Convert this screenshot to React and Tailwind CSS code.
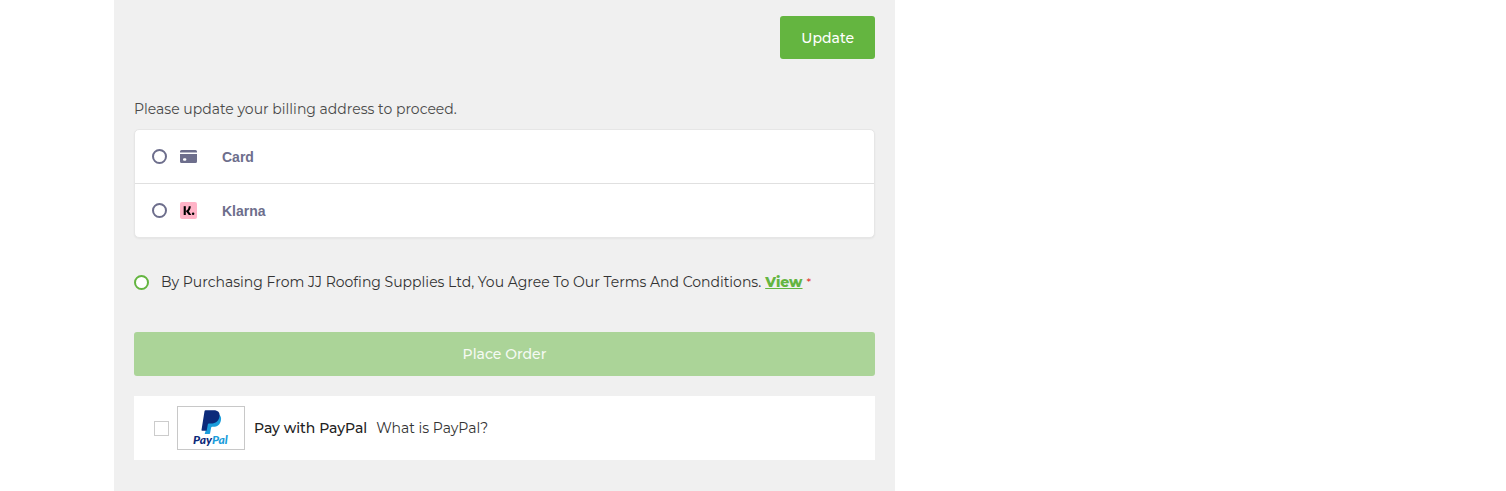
import { useState } from 'react';

function CardIcon() {
    return (
        <svg className="w-[17px] h-[17px]" viewBox="0 0 17 17" fill="#6d6e8c" aria-hidden="true">
            <path d="M1.5 2h14A1.5 1.5 0 0 1 17 3.5V4.4H0V3.5A1.5 1.5 0 0 1 1.5 2z" />
            <path fillRule="evenodd" d="M0 6h17v7.5a1.5 1.5 0 0 1-1.5 1.500h-14A1.5 1.5 0 0 1 0 13.500zM4.300 10.200a1.300 1.300 0 1 0 0 2.600h.8a1.300 1.300 0 1 0 0-2.600z" />
        </svg>
    );
}

function KlarnaIcon() {
    return (
        <svg className="w-[17px] h-[17px]" viewBox="0 0 17 17" aria-hidden="true">
            <rect width="17" height="17" rx="2" fill="#ffb3c7" />
            <path d="M3.700 4.200h2.100v8.800H3.700z" />
            <path d="M10.800 4.200H8.700c0 1.800-.8 3.300-2.100 4.300l-.8.600 3 3.900h2.600L8.700 9.300c1.300-1.300 2.100-3 2.100-5.100z" />
            <circle cx="13.100" cy="11.800" r="1.250" />
        </svg>
    );
}

function PayPalLogo() {
    return (
        <svg className="w-[66px] h-[42px]" viewBox="0 0 66 42" role="img" aria-label="PayPal">
            <path fill="#1a9ddb" d="M40.800 7.500c2 1.200 2.700 3.200 2.100 6-.9 4.300-3.600 6.300-7.600 6.300h-1.200c-.5 0-.9.400-1 .9l-1 5.600c-.1.400-.4.700-.8.700h-4.600l1.600-5.600 2-10.300z" />
            <path fill="#0c2a7a" d="M27.600 3.200h8.100c4.200 0 6.500 2.200 5.800 6.300-.8 4.800-3.800 7-8.400 7h-2.200c-.6 0-1 .4-1.100 1l-1 5.400c-.1.600-.4.800-.9.800h-3.800c-.5 0-.7-.3-.6-.8l3-18.700c.1-.6.500-1 1.100-1z" />
            <text x="15" y="37" className="font-['Lato',sans-serif] text-[12px] font-black italic">
                <tspan fill="#0c2a7a">Pay</tspan>
                <tspan fill="#1a9ddb">Pal</tspan>
            </text>
        </svg>
    );
}

const methods = [
    { id: 'card', label: 'Card', Icon: CardIcon },
    { id: 'klarna', label: 'Klarna', Icon: KlarnaIcon },
];

export default function App() {
    const [method, setMethod] = useState('');

    return (
        <div className="min-h-screen bg-white px-[114px] font-['Montserrat','Inter',sans-serif] text-sm text-[#333]">
            <div className="grid min-h-screen grid-cols-[11fr_7fr]">
                <form className="bg-[#f0f0f0] px-5 pt-4" onSubmit={(e) => e.preventDefault()}>
                    <div className="flex justify-end">
                        <button type="button" className="h-[43px] rounded-[3px] bg-[#64b540] px-[21px] font-medium text-white">
                            Update
                        </button>
                    </div>

                    {/* Payment methods */}
                    <p className="mt-10 text-[#4a4a4a]">Please update your billing address to proceed.</p>
                    <div className="mt-[10px] divide-y divide-[#e0e0e0] rounded-[5px] border border-[#e6e6e6] bg-white font-['Liberation_Sans',sans-serif] font-bold text-[#6d6e8c] shadow-xs">
                        {methods.map(({ id, label, Icon }) => (
                            <label key={id} className="box-content flex h-[53px] items-center pl-[17px]">
                                <input
                                    type="radio"
                                    name="method"
                                    value={id}
                                    checked={method === id}
                                    onChange={() => setMethod(id)}
                                    className="mr-[13px] size-[15px] appearance-none rounded-full border-2 border-[#6d6e8c] bg-white checked:border-4"
                                />
                                <Icon />
                                <span className="ml-[25px]">{label}</span>
                            </label>
                        ))}
                    </div>

                    {/* Terms */}
                    <div className="mt-[34px] flex items-center">
                        <input
                            type="radio"
                            id="terms"
                            name="terms"
                            className="mr-3 size-[15px] appearance-none rounded-full border-2 border-[#64b540] bg-white checked:border-4"
                        />
                        <label htmlFor="terms">
                            By Purchasing From JJ Roofing Supplies Ltd, You Agree To Our Terms And Conditions.
                        </label>
                        <a href="#terms" className="ml-1 font-extrabold text-[#64b540] underline">View</a>
                        <span className="ml-1 text-xs text-[#e02b27]">*</span>
                    </div>

                    <button type="submit" className="mt-10 h-11 w-full rounded-[3px] bg-[#abd498] font-medium text-[#f5faf3]">
                        Place Order
                    </button>

                    {/* PayPal */}
                    <div className="mt-5 flex h-16 items-center bg-white pl-5">
                        <input
                            type="checkbox"
                            id="paypal"
                            className="mr-2 size-[15px] appearance-none border border-[#ccc] bg-white checked:bg-[#64b540]"
                        />
                        <label htmlFor="paypal" className="flex items-center font-medium text-[#222]">
                            <span className="mr-[9px] border border-[#c8c8c8]">
                                <PayPalLogo />
                            </span>
                            Pay with PayPal
                        </label>
                        <a href="#paypal" className="ml-[9px]">What is PayPal?</a>
                    </div>
                </form>
            </div>
        </div>
    );
}
